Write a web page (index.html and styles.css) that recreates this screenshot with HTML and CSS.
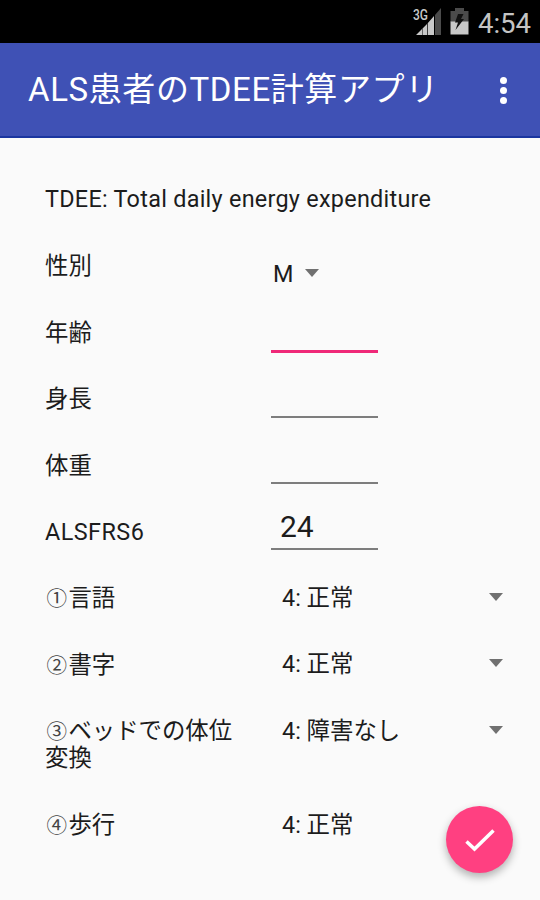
FILE: index.html
```
<!DOCTYPE html>
<html lang="ja">
  <head>
    <meta charset="UTF-8" />
    <meta name="viewport" content="width=device-width, initial-scale=1.0" />
    <title>ALS患者のTDEE計算アプリ</title>

    <link rel="stylesheet" href="styles.css">
  </head>
  <body>
    <div class="status-bar">
      <svg class="signal" width="30" height="32" viewBox="0 -4 30 32">
        <path d="M4 27L10 21V27Z M10.500 20.500L15 16V27H10.500Z M15.700 15.300L22 8V27H15.700Z" fill="#c8c8c8" />
        <path d="M23 7L29 0V27H23Z" fill="#4b4b4b" />
        <text x="1" y="12" textLength="15" lengthAdjust="spacingAndGlyphs">3G</text>
      </svg>
      <svg class="battery" width="19" height="27" viewBox="0 0 19 27">
        <path d="M5 0H14V3H18.5V14H.5V3H5Z" fill="#4b4b4b" />
        <path d="M.5 13.500H18.500V26.500H.5Z" fill="#c8c8c8" />
        <path d="M8 6H13.500L11 11H14L5.500 22L8 14.500H5Z" fill="#111" />
      </svg>
      <span class="clock">4:54</span>
    </div>

    <header class="app-bar">
      <h1>ALS患者のTDEE計算アプリ</h1>
      <button class="menu" aria-label="メニュー">
        <i></i><i></i><i></i>
      </button>
    </header>

    <main>
      <form class="form">
        <p class="description">TDEE: Total daily energy expenditure</p>

        <div class="row">
          <label for="sex">性別</label>
          <div class="select select-small">
            <select id="sex">
              <option>M</option>
              <option>F</option>
            </select>
          </div>
        </div>

        <div class="row">
          <label for="age">年齢</label>
          <input id="age" class="active" type="text" />
        </div>

        <div class="row">
          <label for="height">身長</label>
          <input id="height" type="text" />
        </div>

        <div class="row">
          <label for="weight">体重</label>
          <input id="weight" type="text" />
        </div>

        <div class="row">
          <label for="alsfrs6" class="latin">ALSFRS6</label>
          <input id="alsfrs6" type="text" value="24" />
        </div>

        <div class="row">
          <label for="speech"><span class="number">①</span>言語</label>
          <div class="select">
            <select id="speech">
              <option>4: 正常</option>
            </select>
          </div>
        </div>

        <div class="row">
          <label for="handwriting"><span class="number">②</span>書字</label>
          <div class="select">
            <select id="handwriting">
              <option>4: 正常</option>
            </select>
          </div>
        </div>

        <div class="row row-tall">
          <label for="turning"><span class="number">③</span>ベッドでの体位変換</label>
          <div class="select">
            <select id="turning">
              <option>4: 障害なし</option>
            </select>
          </div>
        </div>

        <div class="row">
          <label for="walking"><span class="number">④</span>歩行</label>
          <div class="select">
            <select id="walking">
              <option>4: 正常</option>
            </select>
          </div>
        </div>
      </form>
    </main>

    <button class="fab" aria-label="計算">
      <svg width="34" height="34" viewBox="0 0 34 34">
        <path d="M3.500 18.500L11.500 26L30.500 7.500" />
      </svg>
    </button>
  </body>
</html>
```

FILE: styles.css
```
* {
  box-sizing: border-box;
}

body {
  margin: 0;
  height: 900px;
  overflow: hidden;
  background: #fafafa;
  color: #1c1c1c;
  font-family: Roboto, "Noto Sans CJK JP", sans-serif;
  font-size: 23.4px;
}

button {
  border: 0;
  padding: 0;
}

/* Status bar */
.status-bar {
  display: flex;
  justify-content: flex-end;
  height: 43px;
  padding-right: 9px;
  background: #000;
}

.signal {
  margin: 4px 8px 0 0;
  overflow: visible;
}

.signal text {
  fill: #c8c8c8;
  stroke: #000;
  stroke-width: 2px;
  paint-order: stroke;
  font-size: 15px;
  font-weight: 500;
}

.battery {
  margin: 8px 9px 0 0;
}

.clock {
  color: #c4c4c4;
  font-size: 27.5px;
  line-height: 47px;
}

/* App bar */
.app-bar {
  display: flex;
  align-items: center;
  justify-content: space-between;
  height: 95px;
  padding: 0 33px 0 28px;
  background: #3f51b5;
  border-bottom: 2px solid #1b36a0;
}

.app-bar h1 {
  margin: 0;
  padding-top: 1px;
  color: #fff;
  font-size: 33px;
  font-weight: 400;
  letter-spacing: .6px;
  line-height: 40px;
}

.menu {
  display: flex;
  flex-direction: column;
  gap: 2.5px;
  padding-top: 2px;
  background: none;
}

.menu i {
  width: 7.5px;
  height: 7.5px;
  border-radius: 50%;
  background: #fff;
}

/* Form */
.form {
  padding: 28px 35px 0 45px;
}

.description {
  margin: 0;
  height: 66.4px;
  line-height: 67.4px;
  letter-spacing: .27px;
}

.row {
  display: grid;
  grid-template-columns: 200px 1fr;
  column-gap: 26px;
  align-items: start;
  height: 66.4px;
}

.row-tall {
  height: 94px;
}

.row label {
  padding-top: 21px;
  line-height: 27px;
}

.row label.latin {
  letter-spacing: .45px;
}

.number {
  display: inline-block;
  width: 23.4px;
  color: #444;
  font-size: 20.5px;
  line-height: 20px;
  text-align: center;
}

.row input {
  width: 107px;
  height: 52.5px;
  padding: 6px 9px 0;
  border: 0;
  border-bottom: 2px solid #7d7d7d;
  outline: 0;
  background: none;
  color: #1c1c1c;
  font: 30px Roboto, sans-serif;
}

.row input.active {
  height: 54px;
  border-bottom: 3px solid #ef2878;
}

.select {
  display: flex;
  align-items: center;
  justify-content: space-between;
  height: 67px;
  padding: 0 2px 0 11px;
}

.select::after {
  content: "";
  margin-bottom: 2px;
  border: 7.5px solid transparent;
  border-top: 8.5px solid #707070;
  border-bottom: 0;
}

.select select {
  padding: 0;
  border: 0;
  outline: 0;
  appearance: none;
  background: none;
  color: inherit;
  font: inherit;
}

.select-small {
  justify-content: flex-start;
  gap: 11px;
  height: 83px;
  padding-left: 2px;
}

/* Floating button */
.fab {
  position: fixed;
  right: 27px;
  bottom: 27px;
  display: flex;
  align-items: center;
  justify-content: center;
  width: 67px;
  height: 67px;
  border-radius: 50%;
  background: #ff4081;
  box-shadow: 0 4px 9px rgba(0, 0, 0, .3);
}

.fab path {
  fill: none;
  stroke: #fff;
  stroke-width: 3.5px;
}
```
